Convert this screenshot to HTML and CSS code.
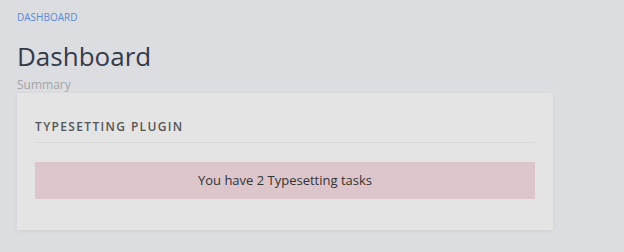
FILE: index.html
```html
<!DOCTYPE html>
<html lang="en">
<head>
  <meta charset="UTF-8">
  <title>Dashboard</title>
  <link rel="stylesheet" href="styles.css">
</head>
<body>

  <div class="page">
    <nav class="breadcrumb"><a href="#">DASHBOARD</a></nav>

    <h1 class="page-title">Dashboard</h1>
    <p class="page-subtitle">Summary</p>

    <div class="card">
      <h2 class="card-title">TYPESETTING PLUGIN</h2>
      <div class="alert">You have 2 Typesetting tasks</div>
    </div>
  </div>

</body>
</html>
```

FILE: styles.css
```css
body {
  font-family: 'Open Sans', sans-serif;
  background: #dcdde1;
  color: #333;
  margin: 0;
  padding: 0;
}

.page {
  padding: 10px 17px;
}

.breadcrumb {
  font-size: 10px;
  line-height: 14px;
}

.breadcrumb a {
  color: #5b8ad6;
  text-decoration: none;
}

.page-title {
  font-size: 26px;
  font-weight: 400;
  color: #353a47;
  margin: 16px 0 0;
  line-height: 32px;
}

.page-subtitle {
  font-size: 12px;
  color: #a3a4aa;
  margin: 5px 0 1px;
  line-height: 15px;
}

.card {
  width: 500px;
  background: #e4e4e4;
  padding: 26px 18px 31px;
  box-shadow: 0 1px 4px rgba(0,0,0,0.05);
}

.card-title {
  font-size: 12px;
  font-weight: 600;
  letter-spacing: 1.35px;
  color: #555;
  margin: 0 0 19px;
  padding-bottom: 7px;
  line-height: 16px;
  border-bottom: 1px solid #d9d9d9;
}

.alert {
  background: #dcc6cc;
  color: #333;
  font-size: 13px;
  text-align: center;
  padding: 10px;
  line-height: 17px;
}
```
